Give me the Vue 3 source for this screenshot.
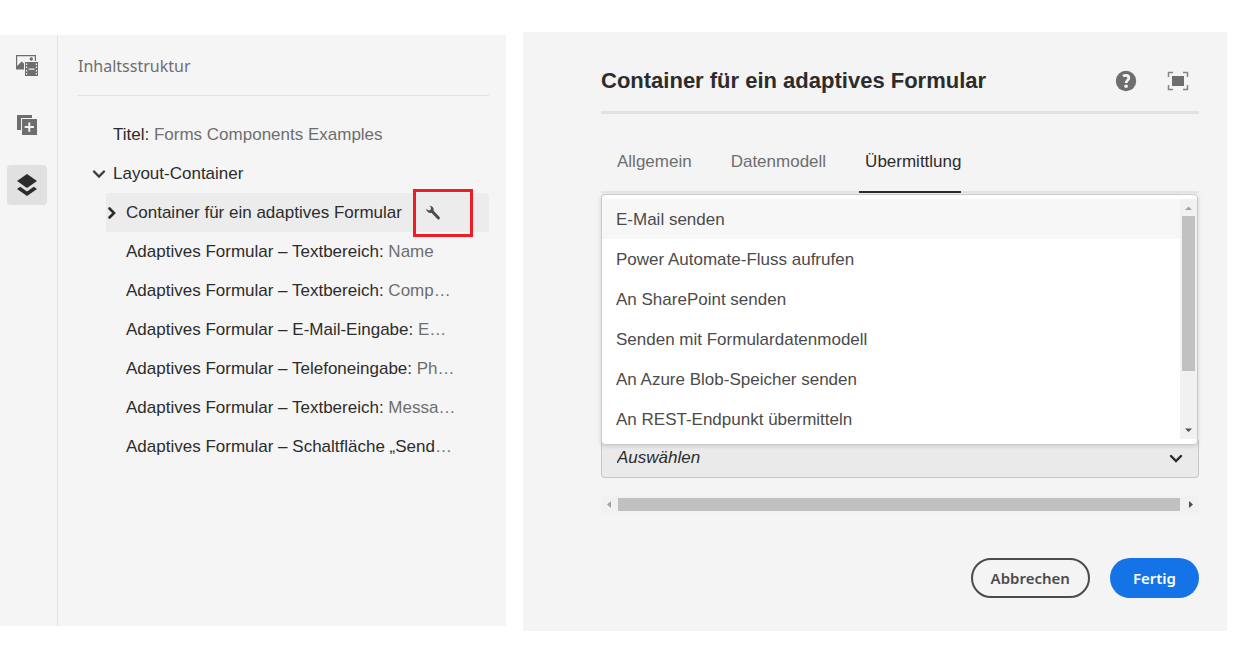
<script setup>
import { ref } from 'vue'

const rows = [
  { level: 1, label: 'Titel:', value: 'Forms Components Examples' },
  { level: 1, label: 'Layout-Container', value: '', chevron: 'down' },
  { level: 2, label: 'Container für ein adaptives Formular', value: '', chevron: 'right', selected: true },
  { level: 2, label: 'Adaptives Formular – Textbereich:', value: 'Name' },
  { level: 2, label: 'Adaptives Formular – Textbereich:', value: 'Comp…' },
  { level: 2, label: 'Adaptives Formular – E-Mail-Eingabe:', value: 'E…' },
  { level: 2, label: 'Adaptives Formular – Telefoneingabe:', value: 'Ph…' },
  { level: 2, label: 'Adaptives Formular – Textbereich:', value: 'Messa…' },
  { level: 2, label: 'Adaptives Formular – Schaltfläche „Send', tail: '…' },
]

const tabs = ['Allgemein', 'Datenmodell', 'Übermittlung']
const activeTab = ref('Übermittlung')

const options = [
  'E-Mail senden',
  'Power Automate-Fluss aufrufen',
  'An SharePoint senden',
  'Senden mit Formulardatenmodell',
  'An Azure Blob-Speicher senden',
  'An REST-Endpunkt übermitteln',
]
const highlighted = ref(0)
</script>

<template>
  <main class="page">
    <section class="side">
      <nav class="rail" aria-label="Seitenleiste">
        <button class="rail-btn" type="button" aria-label="Assets">
          <svg width="24" height="24" viewBox="0 0 24 24" fill="#6e6e6e">
            <path d="M1 2h20v6h-1.200V3.200H2.200V13L6.500 8.500 9 10.500v6H1z" />
            <circle cx="16.300" cy="6" r="1.700" />
            <path fill-rule="evenodd" d="M10 9h13v14H10zM13.500 15.400v1.300h6v-1.300zM11 10.500v1.600h1.200v-1.600zM11 13.500v1.600h1.200v-1.600zM11 17v1.600h1.200V17zM11 20v1.600h1.200V20zM20.800 10.500v1.600H22v-1.600zM20.800 13.500v1.600H22v-1.600zM20.800 17v1.600H22V17zM20.800 20v1.600H22V20z" />
          </svg>
        </button>
        <button class="rail-btn" type="button" aria-label="Komponenten">
          <svg width="24" height="24" viewBox="0 0 24 24" fill="#6e6e6e">
            <path d="M2 2h15v3H6v12H2z" />
            <path fill-rule="evenodd" d="M7 6h15v16H7zM13.300 9.500v3.600H9.700v2h3.600v3.600h2v-3.600h3.600v-2h-3.600V9.500z" />
          </svg>
        </button>
        <button class="rail-btn active" type="button" aria-label="Inhaltsstruktur">
          <svg width="24" height="24" viewBox="0 0 24 24" fill="#2c2c2c">
            <path d="M12 1l10 7-10 7L2 8z" />
            <path d="M2 16l3.200-2.300 6.800 4.800 6.800-4.800L22 16l-10 7z" />
          </svg>
        </button>
      </nav>
      <div class="tree-pane">
        <h2 class="tree-title">Inhaltsstruktur</h2>
        <ul class="tree" role="tree">
          <li
            v-for="(row, i) in rows"
            :key="i"
            role="treeitem"
            class="row"
            :class="['level-' + row.level, { selected: row.selected }]"
            :aria-selected="!!row.selected"
          >
            <span class="twisty">
              <svg v-if="row.chevron === 'down'" width="14" height="10" viewBox="0 0 14 10" fill="none" stroke="#3c3c3c" stroke-width="2.400" stroke-linecap="round"><path d="M2 2.500l5 5 5-5" /></svg>
              <svg v-else-if="row.chevron === 'right'" width="12" height="14" viewBox="0 0 12 14" fill="none" stroke="#2c2c2c" stroke-width="2.600" stroke-linecap="round"><path d="M3.500 2.500L8 7l-4.500 4.500" /></svg>
            </span>
            <span class="label">{{ row.label }}<span v-if="row.value" class="value">&nbsp;{{ row.value }}</span><span v-if="row.tail" class="value">{{ row.tail }}</span></span>
            <button v-if="row.selected" class="configure" type="button" aria-label="Konfigurieren">
              <svg width="16" height="16" viewBox="0 0 16 16" fill="#4b4b4b">
                <path d="M4.600.700A4 4 0 0 1 8.600 5.700L14.500 11.900A1.400 1.400 0 0 1 12.400 14L6.400 7.800A4 4 0 0 1 1.300 3.800L3.700 5.500L5.600 4.900L6 2.800z" />
              </svg>
            </button>
          </li>
        </ul>
      </div>
    </section>

    <section class="dialog">
      <header class="dialog-head">
        <h1>Container für ein adaptives Formular</h1>
        <button class="icon-btn" type="button" aria-label="Hilfe">
          <svg width="22" height="22" viewBox="0 0 22 22">
            <circle cx="11" cy="11" r="10.200" fill="#6e6e6e" />
            <path d="M8 6.200c2.200-1.500 5.800-1.200 5.800 1.700 0 2.400-2.700 2.600-2.700 5.200" fill="none" stroke="#f4f4f4" stroke-width="2.800" />
            <circle cx="11.100" cy="16.300" r="1.800" fill="#f4f4f4" />
          </svg>
        </button>
        <button class="icon-btn" type="button" aria-label="Vollbild">
          <svg width="22" height="22" viewBox="0 0 22 22">
            <rect x="5" y="6" width="12" height="10" fill="#6e6e6e" />
            <path d="M1.500 7V2.500H6M16 2.500h4.500V7M20.500 15v4.500H16M6 19.500H1.500V15" fill="none" stroke="#858585" stroke-width="1.500" />
          </svg>
        </button>
      </header>

      <div class="tabs" role="tablist">
        <button
          v-for="t in tabs"
          :key="t"
          type="button"
          role="tab"
          class="tab"
          :class="{ current: t === activeTab }"
          :aria-selected="t === activeTab"
          @click="activeTab = t"
        >{{ t }}</button>
      </div>

      <div class="field">
        <div class="select-wrap">
          <select class="select" aria-label="Übermittlungsaktion">
            <option>Auswählen</option>
          </select>
          <svg class="select-arrow" width="14" height="10" viewBox="0 0 14 10" fill="none" stroke="#2c2c2c" stroke-width="2.400" stroke-linecap="round"><path d="M2 2l5 5 5-5" /></svg>
        </div>
        <div class="popup">
          <ul class="options" role="listbox" aria-label="Übermittlungsaktion">
            <li
              v-for="(o, i) in options"
              :key="o"
              role="option"
              class="option"
              :class="{ on: i === highlighted }"
              :aria-selected="i === highlighted"
              @mouseenter="highlighted = i"
            >{{ o }}</li>
          </ul>
          <div class="vbar">
            <svg class="arrow" viewBox="0 0 17 17"><path d="M5 11h7L8.500 7.500z" fill="#a3a3a3" /></svg>
            <div class="vtrack"><div class="vthumb"></div></div>
            <svg class="arrow" viewBox="0 0 17 17"><path d="M5 6.500h7L8.500 10z" fill="#505050" /></svg>
          </div>
        </div>
      </div>

      <div class="hbar">
        <svg class="arrow" viewBox="0 0 17 17"><path d="M10 5v7L6 8.500z" fill="#a3a3a3" /></svg>
        <div class="hthumb"></div>
        <svg class="arrow" viewBox="0 0 17 17"><path d="M7 5v7l4-3.500z" fill="#505050" /></svg>
      </div>

      <footer class="actions">
        <button class="btn outline" type="button">Abbrechen</button>
        <button class="btn primary" type="button">Fertig</button>
      </footer>
    </section>
  </main>
</template>

<style>
body {
  background: #fff;
}
</style>

<style scoped>
.page {
  display: grid;
  grid-template-columns: 506fr 704fr;
  gap: 17px;
  padding: 32px 13px 22px 0;
  font-family: "Liberation Sans", Arial, sans-serif;
  font-size: 17px;
  line-height: 20px;
  color: #2c2c2c;
}
.page *,
.page {
  box-sizing: border-box;
}
button {
  margin: 0;
  padding: 0;
  border: 0;
  background: none;
  font: inherit;
  color: inherit;
}
h1,
h2,
ul {
  margin: 0;
  padding: 0;
  list-style: none;
}
svg {
  display: block;
}
.side {
  display: flex;
  min-width: 0;
  margin: 3px 0 5px;
  background: #f5f5f5;
}
.rail {
  display: flex;
  flex: none;
  flex-direction: column;
  gap: 20px;
  width: 58px;
  padding: 10px 0 0 7px;
  border-right: 1px solid #e1e1e1;
}
.rail-btn {
  display: grid;
  place-items: center;
  width: 40px;
  height: 40px;
  border-radius: 4px;
}
.rail-btn.active {
  background: #e1e1e1;
}
.tree-pane {
  flex: 1;
  min-width: 0;
  padding: 0 17px 0 20px;
}
.tree-title {
  height: 61px;
  border-bottom: 1px solid #e1e1e1;
  font-family: "Noto Sans", "Open Sans", sans-serif;
  font-size: 16px;
  font-weight: 400;
  line-height: 62px;
  color: #6e6e6e;
}
.tree {
  padding-top: 19px;
}
.row {
  display: flex;
  align-items: center;
  height: 39px;
  margin-left: 14px;
  white-space: nowrap;
}
.row.level-2 {
  margin-left: 28px;
}
.twisty {
  flex: none;
  width: 21px;
}
.level-2 .twisty {
  width: 20px;
}
.row.selected {
  background: #ececec;
  border-radius: 3px;
}
.value {
  color: #6e6e6e;
}
.configure {
  display: grid;
  place-items: center;
  width: 60px;
  height: 48px;
  margin-left: auto;
  margin-right: 16px;
  padding-right: 20px;
  border: 3px solid #ee1c25;
}
.dialog {
  min-width: 0;
  padding: 0 28px 33px 78px;
  background: #f4f4f4;
}
.dialog-head {
  display: flex;
  align-items: center;
  gap: 30px;
  height: 82px;
  padding: 19px 10px 0 0;
  border-bottom: 3px solid #e1e1e1;
}
.dialog-head h1 {
  flex: 1;
  font-size: 22px;
  line-height: 28px;
}
.tabs {
  display: flex;
  gap: 33px;
  margin-top: 32px;
  padding-left: 10px;
  border-bottom: 2px solid #e6e6e6;
}
.tab {
  height: 47px;
  margin-bottom: -2px;
  padding: 0 0 14px 6px;
  border-bottom: 2px solid transparent;
  color: #6e6e6e;
}
.tab.current {
  border-bottom-color: #2c2c2c;
  color: #2c2c2c;
}
.field {
  position: relative;
  padding-top: 245px;
}
.select-wrap {
  position: relative;
}
.select {
  display: block;
  width: 100%;
  height: 40px;
  padding: 0 15px;
  appearance: none;
  border: 1px solid #c6c6c6;
  border-radius: 4px;
  background: #eaeaea;
  font: inherit;
  font-style: italic;
  color: #2c2c2c;
}
.select-arrow {
  position: absolute;
  top: 16px;
  right: 16px;
  pointer-events: none;
}
.popup {
  position: absolute;
  top: 1px;
  left: 0;
  right: 1px;
  display: flex;
  padding: 4px 0 5px;
  border: 1px solid #cacaca;
  border-radius: 4px;
  background: #fff;
  box-shadow: 0 1px 4px rgba(0, 0, 0, 0.15);
}
.options {
  flex: 1;
}
.option {
  height: 40px;
  padding: 1px 14px 0;
  line-height: 40px;
  color: #4b4b4b;
}
.option.on {
  background: #f7f7f7;
}
.vbar {
  display: flex;
  flex-direction: column;
  width: 17px;
  background: #f1f1f1;
}
.arrow {
  flex: none;
  width: 17px;
  height: 17px;
}
.vtrack {
  flex: 1;
  padding: 0 2px;
}
.vthumb {
  height: 75%;
  background: #c1c1c1;
}
.hbar {
  display: flex;
  align-items: center;
  margin-top: 18px;
  background: #f1f1f1;
}
.hthumb {
  flex: 1;
  height: 13px;
  margin-right: 2px;
  background: #c1c1c1;
}
.actions {
  display: flex;
  justify-content: flex-end;
  gap: 20px;
  margin-top: 45px;
}
.btn {
  height: 40px;
  border-radius: 20px;
  font-family: "Noto Sans", "Open Sans", sans-serif;
  font-size: 15px;
  font-weight: 600;
}
.outline {
  padding: 0 18px;
  border: 2px solid #4b4b4b;
  color: #4b4b4b;
}
.primary {
  padding: 0 23px;
  background: #1473e6;
  color: #fff;
}
</style>
